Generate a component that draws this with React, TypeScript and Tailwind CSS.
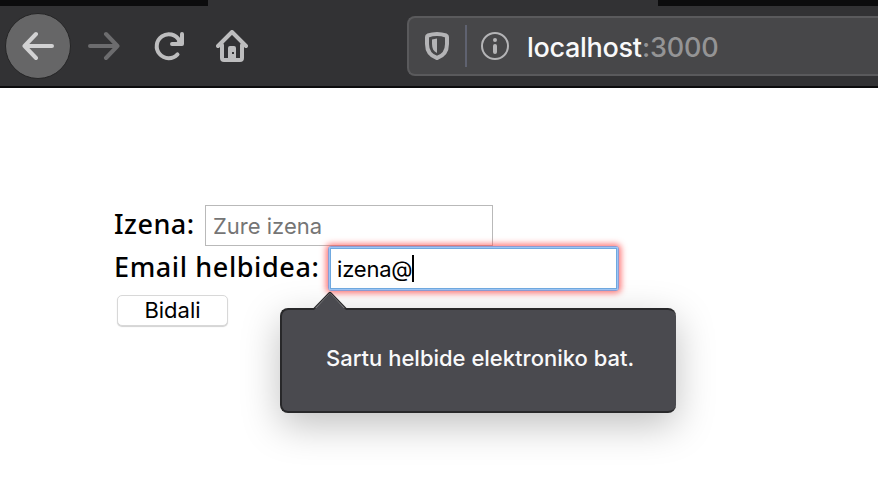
function ArrowIcon({ className }: { className: string }) {
  return (
    <svg className={className} width="32" height="32" viewBox="0 0 32 32" fill="none" stroke="currentColor" strokeWidth="4" strokeLinecap="round" strokeLinejoin="round">
      <path d="M30 16H2.5M14 4 2.5 16 14 28" />
    </svg>
  );
}

function ReloadIcon() {
  return (
    <svg className="h-8 w-8 text-[#bdbdbe]" viewBox="0 0 32 32" fill="none" stroke="currentColor" strokeWidth="4" strokeLinecap="round" strokeLinejoin="round">
      <path d="M23.5 24.4A12 12 0 1 1 25.3 10.5" />
      <path d="M28 4V14H18" />
      <path d="M28 8V14H22Z" fill="currentColor" strokeWidth="2" />
    </svg>
  );
}

function HomeIcon() {
  return (
    <svg className="h-8 w-8 text-[#bdbdbe]" viewBox="0 0 32 32" fill="none" stroke="currentColor" strokeWidth="4" strokeLinecap="round" strokeLinejoin="round">
      <path d="M2 16 16 2 30 16" />
      <path d="M6 15V28Q6 30 8 30H24Q26 30 26 28V15" />
      <path d="M12 30V18Q12 16 14 16H18Q20 16 20 18V30ZM16 22V24H18V22Z" fill="currentColor" fillRule="evenodd" stroke="none" />
    </svg>
  );
}

function ShieldIcon() {
  return (
    <svg className="h-7 w-6 text-[#b4b4b6]" viewBox="0 0 24 28" fill="none">
      <path d="M12 2C15 2 19 2.8 21 3.5Q22 4 22 5V12C22 20 18 24 12 26C6 24 2 20 2 12V5Q2 4 3 3.5C5 2.8 9 2 12 2Z" stroke="currentColor" strokeWidth="4" strokeLinejoin="round" />
      <path d="M12 6.5V21C8.5 19.5 7 16.5 7 12V7.5Z" fill="currentColor" />
    </svg>
  );
}

function InfoIcon() {
  return (
    <svg className="h-7 w-7 text-[#b4b4b6]" viewBox="0 0 28 28" fill="none" stroke="currentColor">
      <circle cx="14" cy="14" r="13" strokeWidth="2" />
      <circle cx="14" cy="8" r="2" fill="currentColor" stroke="none" />
      <path d="M14 14V20" strokeWidth="4" strokeLinecap="round" />
    </svg>
  );
}

export default function App() {
  return (
    <div className="relative h-[500px] w-[878px] overflow-hidden bg-white font-['Inter',sans-serif]">
      <header className="flex h-[88px] flex-col border-b-2 border-[#0c0c0d] bg-[#323234]">
        <div className="flex h-1.5 shrink-0 justify-between">
          <div className="w-[208px] bg-[#0c0c0d]" />
          <div className="w-[220px] bg-[#0c0c0d]" />
        </div>
        <nav className="flex h-20 items-center pl-[5px]">
          <div className="flex h-[66px] w-[66px] items-center justify-center rounded-full border border-[#252526] bg-[#666667]">
            <ArrowIcon className="text-[#d2d2d3]" />
          </div>
          <ArrowIcon className="ml-[17px] rotate-180 text-[#6c6c6e]" />
          <div className="ml-[34px] flex gap-[30px]">
            <ReloadIcon />
            <HomeIcon />
          </div>
          <div className="ml-[159px] flex h-[60px] flex-1 items-center rounded-l-lg border-2 border-r-0 border-[#5a5a5c] bg-[#474749] pl-4">
            <ShieldIcon />
            <div className="ml-4 h-[42px] w-0.5 bg-[#5f6270]" />
            <div className="ml-3.5">
              <InfoIcon />
            </div>
            <div className="ml-[18px] flex pt-[3px] text-[27px] leading-9 font-medium whitespace-nowrap">
              <span className="w-[115px] tracking-[-0.3px] text-[#f9f9fa]">localhost</span>
              <span className="tracking-[-0.2px] text-[#949495]">:3000</span>
            </div>
          </div>
        </nav>
      </header>

      <form className="flex flex-col pt-[117px] pl-[114px] text-black">
        <div className="flex h-[41px]">
          <label className="w-[91px] font-['Noto_Sans',sans-serif] text-[27px] leading-[38px] font-medium tracking-[0.5px] whitespace-nowrap">Izena:</label>
          <input className="h-[41px] w-[288px] border border-[#b9b9b9] bg-white px-[7px] text-[22px] placeholder:text-[#757575]" placeholder="Zure izena" />
        </div>
        <div className="flex h-[45px]">
          <label className="w-[214px] font-['Noto_Sans',sans-serif] text-[27px] leading-[42px] font-medium tracking-[0.6px] whitespace-nowrap">Email helbidea:</label>
          <div className="flex h-[45px] w-[291px] rounded-[3px] border border-[#8e9bd4] bg-white shadow-[0_0_6px_2px_rgba(255,70,70,0.75)]">
            <div className="flex w-full border border-[#9cc6f5]">
              <div className="flex w-full items-center border border-[#70a9e0] pl-1.5 text-[22px] tracking-[-0.2px]">
                <span className="pt-px">izena@</span>
                <span className="h-[27px] w-0.5 bg-black" />
              </div>
            </div>
          </div>
        </div>
        <button type="button" className="mt-1 ml-[3px] h-[31px] w-[111px] rounded-[5px] border border-[#d8d8d8] bg-white pb-0.5 text-[22px] leading-[26px] shadow-[0_1px_1px_rgba(0,0,0,0.18)]">Bidali</button>
      </form>

      <div className="absolute top-[308px] left-[280px] flex h-[105px] w-[396px] items-center rounded-lg border-2 border-r-0 border-[#28282a] bg-[#4a4a4f] pb-1 pl-11 text-[22px] text-[#f9f9fa] shadow-[0_12px_38px_rgba(0,0,0,0.25)]">
        <span className="font-medium whitespace-nowrap">Sartu helbide elektroniko bat.</span>
        <svg className="absolute -top-[19px] left-[30px]" width="36" height="20" viewBox="0 0 36 20">
          <path d="M1 20 18 2 35 20Z" fill="#4a4a4f" />
          <path d="M1 18.5 17 2Q18 1 19 2L35 18.5" fill="none" stroke="#28282a" strokeWidth="1.3" />
        </svg>
      </div>
    </div>
  );
}
